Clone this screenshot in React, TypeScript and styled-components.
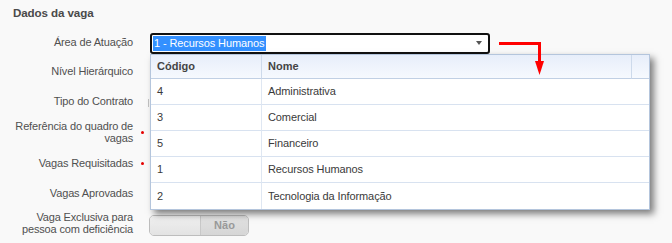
import React from "react";
import styled, { createGlobalStyle } from "styled-components";

const Global = createGlobalStyle`
  html, body { margin: 0; padding: 0; background: #f9f9f9; }
  body { font-family: "Liberation Sans", Arial, sans-serif; }
`;

const Page = styled.div`
  position: relative;
  width: 672px;
  height: 243px;
  overflow: hidden;
  background: #f9f9f9;
`;

const Title = styled.div`
  padding: 6px 0 0 13px;
  height: 22px;
  box-sizing: border-box;
  font-size: 11.6px;
  line-height: 14px;
  font-weight: bold;
  letter-spacing: -0.1px;
  color: #4a4a4a;
`;

const Form = styled.div`
  display: grid;
  grid-template-columns: 133px 15px 1fr;
  grid-template-rows: 29px 30px 30px 31px 31px 30px 30px;
  margin-top: 6px;
`;

const Label = styled.div`
  grid-column: 1;
  display: flex;
  align-items: center;
  justify-content: flex-end;
  text-align: right;
  font-size: 11px;
  letter-spacing: -0.15px;
  line-height: 11.6px;
  color: #505050;
`;

const Marker = styled.div`
  grid-column: 2;
  display: flex;
  align-items: center;
  padding-left: 8px;
`;

const Dot = styled.span`
  width: 3px;
  height: 3px;
  border-radius: 50%;
  background: #e40000;
`;

const Field = styled.div`
  grid-column: 3;
  display: flex;
  align-items: center;
  position: relative;
`;

const SelectWrap = styled.div`
  position: relative;
  margin-left: 2px;
  margin-top: 1px;
`;

const SelectBox = styled.div`
  width: 340px;
  height: 21px;
  box-sizing: border-box;
  border: 2px solid #111;
  border-radius: 3px;
  background: #fff;
  display: flex;
  align-items: center;
  padding-left: 1px;
  padding-right: 6px;
`;

const Selected = styled.span`
  background: #3390ff;
  color: #fff;
  font-size: 11px;
  letter-spacing: -0.1px;
  line-height: 15px;
  padding: 0 1px;
`;

const Caret = styled.span`
  margin-left: auto;
  width: 0;
  height: 0;
  border-left: 3.5px solid transparent;
  border-right: 3.5px solid transparent;
  border-top: 4px solid #555;
`;

const Panel = styled.div`
  position: absolute;
  top: 100%;
  left: 0;
  width: 500px;
  box-sizing: border-box;
  border: 1px solid #b4c5dc;
  background: #fff;
  box-shadow: 4px 4px 7px rgba(0, 0, 0, 0.5);
  z-index: 5;
`;

const Grid = styled.div`
  display: grid;
  grid-template-columns: 111px 1fr 17px;
`;

const HeadCell = styled.div<{ $last?: boolean }>`
  height: 24px;
  box-sizing: border-box;
  background: linear-gradient(#e7eefa, #f6f9fe);
  border-bottom: 1px solid #c1d0e4;
  border-right: ${(p) => (p.$last ? "none" : "1px solid #cddaeb")};
  display: flex;
  align-items: center;
  padding-left: 6px;
  font-size: 11px;
  font-weight: bold;
  color: #444;
`;

const Cell = styled.div<{ $first?: boolean; $lastRow?: boolean }>`
  height: 26px;
  box-sizing: border-box;
  border-bottom: ${(p) => (p.$lastRow ? "none" : "1px solid #d8e2f0")};
  border-right: ${(p) => (p.$first ? "1px solid #dfe7f2" : "none")};
  display: flex;
  align-items: center;
  padding-left: 6px;
  font-size: 11px;
  letter-spacing: -0.1px;
  color: #3a3a3a;
  grid-column: ${(p) => (p.$first ? "1" : "2 / span 2")};
`;

const Stub = styled.div`
  width: 1px;
  height: 8px;
  background: #c4c4c4;
  margin-top: 2px;
`;

const Toggle = styled.div`
  margin-left: 1px;
  margin-top: 2px;
  width: 100px;
  height: 21px;
  box-sizing: border-box;
  border: 1px solid #bdbdbd;
  border-radius: 5px;
  display: flex;
  overflow: hidden;
`;

const ToggleKnob = styled.div`
  width: 50px;
  background: linear-gradient(#f0f0f0, #e3e3e3);
  border-right: 1px solid #c8c8c8;
`;

const ToggleOff = styled.div`
  flex: 1;
  background: linear-gradient(#e2e2e2, #d6d6d6);
  display: flex;
  align-items: center;
  justify-content: center;
  font-size: 11px;
  font-weight: bold;
  color: #999;
`;

const Arrow = styled.svg`
  position: absolute;
  left: 495px;
  top: 38px;
  overflow: visible;
  z-index: 10;
`;

const rows = [
  ["4", "Administrativa"],
  ["3", "Comercial"],
  ["5", "Financeiro"],
  ["1", "Recursos Humanos"],
  ["2", "Tecnologia da Informação"],
];

export default function App() {
  return (
    <Page>
      <Global />
      <Title>Dados da vaga</Title>
      <Form>
        <Label>Área de Atuação</Label>
        <Marker />
        <Field>
          <SelectWrap>
            <SelectBox>
              <Selected>1 - Recursos Humanos</Selected>
              <Caret />
            </SelectBox>
            <Panel>
              <Grid>
                <HeadCell>Código</HeadCell>
                <HeadCell>Nome</HeadCell>
                <HeadCell $last />
                {rows.map(([c, n], i) => (
                  <React.Fragment key={c}>
                    <Cell $first $lastRow={i === rows.length - 1}>
                      {c}
                    </Cell>
                    <Cell $lastRow={i === rows.length - 1}>{n}</Cell>
                  </React.Fragment>
                ))}
              </Grid>
            </Panel>
          </SelectWrap>
        </Field>

        <Label>Nível Hierárquico</Label>
        <Marker />
        <Field />

        <Label>Tipo do Contrato</Label>
        <Marker />
        <Field>
          <Stub />
        </Field>

        <Label>
          Referência do quadro de
          <br />
          vagas
        </Label>
        <Marker>
          <Dot />
        </Marker>
        <Field />

        <Label>Vagas Requisitadas</Label>
        <Marker>
          <Dot />
        </Marker>
        <Field />

        <Label>Vagas Aprovadas</Label>
        <Marker />
        <Field />

        <Label>
          Vaga Exclusiva para
          <br />
          pessoa com deficiência
        </Label>
        <Marker />
        <Field>
          <Toggle>
            <ToggleKnob />
            <ToggleOff>Não</ToggleOff>
          </Toggle>
        </Field>
      </Form>
      <Arrow width="60" height="45" viewBox="0 0 60 45">
        <polyline
          points="4,5.5 44.5,5.5 44.5,24"
          fill="none"
          stroke="#ff0000"
          strokeWidth="3"
        />
        <polygon points="40,23 49,23 44.5,37" fill="#ff0000" />
      </Arrow>
    </Page>
  );
}
